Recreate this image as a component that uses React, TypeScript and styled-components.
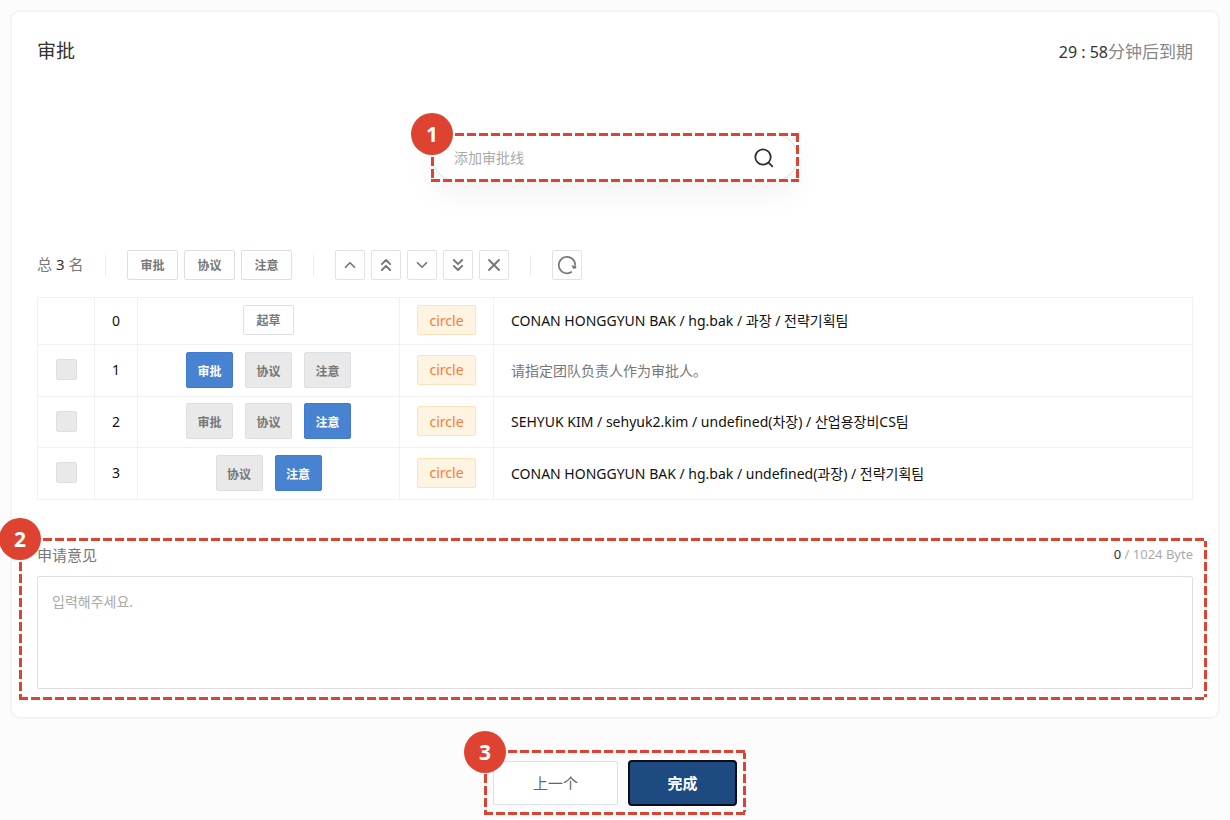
import React from 'react';
import styled, { createGlobalStyle, css } from 'styled-components';
import { ChevronUp, ChevronDown, ChevronsUp, ChevronsDown, X } from 'lucide-react';

const red = '#de4230';
const line = '#f1f1f1';
const controlLine = '#dcdfe4';

const GlobalStyle = createGlobalStyle`
  * { box-sizing: border-box; }
  body {
    margin: 0;
    background: #fcfcfc;
    color: #222;
    font-family: "Noto Sans", "Noto Sans CJK SC", "Noto Sans CJK KR", sans-serif;
    font-size: 14px;
  }
  button, input, textarea { font: inherit; }
`;

const Page = styled.main`
  padding: 10px 10px 14px;
`;

const Card = styled.section`
  display: flex;
  flex-direction: column;
  padding: 23px 25px 28px;
  border: 2px solid #f4f4f4;
  border-radius: 10px;
  background: #fff;
`;

const Header = styled.header`
  display: flex;
  align-items: center;
  justify-content: space-between;
  height: 30px;
`;

const Title = styled.h1`
  margin: 0;
  font-size: 19px;
  font-weight: 400;
  color: #333;
`;

const Timer = styled.p`
  margin: 0;
  font-size: 17px;
  color: #888;
`;

const TimerValue = styled.span`
  color: #333;
  font-size: 16px;
`;

const Callout = styled.div<{ $inset: string }>`
  position: relative;

  &::after {
    content: '';
    position: absolute;
    inset: ${({ $inset }) => $inset};
    pointer-events: none;
    background:
      repeating-linear-gradient(90deg, ${red} 0 9px, #fff 9px 12px) top / 100% 3px no-repeat,
      repeating-linear-gradient(90deg, ${red} 0 9px, #fff 9px 12px) bottom / 100% 3px no-repeat,
      repeating-linear-gradient(180deg, ${red} 0 9px, #fff 9px 12px) left / 3px 100% no-repeat,
      repeating-linear-gradient(180deg, ${red} 0 9px, #fff 9px 12px) right / 3px 100% no-repeat;
  }
`;

const Badge = styled.span<{ $top: number; $left: number }>`
  position: absolute;
  z-index: 1;
  top: ${({ $top }) => $top}px;
  left: ${({ $left }) => $left}px;
  display: flex;
  align-items: center;
  justify-content: center;
  width: 42px;
  height: 42px;
  border-radius: 50%;
  background: ${red};
  color: #fff;
  font-family: "Open Sans", sans-serif;
  font-size: 21px;
  font-weight: 700;
`;

const SearchCallout = styled(Callout)`
  align-self: center;
  width: 366px;
  margin: 69px 0;
`;

const SearchBox = styled.form`
  display: flex;
  align-items: center;
  height: 47px;
  padding: 0 23px 0 21px;
  border: 1px solid ${controlLine};
  border-radius: 24px;
  background: #fff;
  box-shadow: 0 12px 32px rgba(0, 0, 0, 0.06);
`;

const SearchInput = styled.input`
  flex: 1;
  min-width: 0;
  padding: 0;
  border: 0;
  outline: 0;
  background: none;
  &::placeholder { color: #aaa; }
`;

const SearchButton = styled.button`
  display: flex;
  padding: 0;
  border: 0;
  background: none;
  color: #2b2f36;
`;

const Toolbar = styled.div`
  display: flex;
  align-items: center;
  height: 30px;
  margin-bottom: 17px;
`;

const Count = styled.span`
  width: 47px;
  font-size: 15px;
  line-height: 20px;
  padding-bottom: 2px;
  color: #777;
  white-space: nowrap;
`;

const CountValue = styled.span`
  color: #333;
`;

const Separator = styled.span`
  width: 1px;
  height: 21px;
  margin: 0 21px;
  background: #ececec;
`;

const ButtonGroup = styled.div`
  display: flex;
  gap: 6px;
`;

const SmallButton = styled.button`
  width: 51px;
  height: 30px;
  padding: 0;
  border: 1px solid ${controlLine};
  border-radius: 2px;
  background: #fff;
  color: #777;
  font-size: 12px;
  font-weight: 700;
`;

const IconButton = styled.button`
  display: flex;
  align-items: center;
  justify-content: center;
  width: 30px;
  height: 30px;
  padding: 0;
  border: 1px solid #e2e2e2;
  border-radius: 2px;
  background: #fff;
  color: #777;
`;

const Table = styled.table`
  width: 100%;
  border-collapse: collapse;
  table-layout: fixed;
`;

const Row = styled.tr<{ $height: number }>`
  height: ${({ $height }) => $height}px;
`;

const Cell = styled.td<{ $left?: boolean; $muted?: boolean }>`
  padding: 0 ${({ $left }) => ($left ? 17 : 0)}px 2px;
  border: 1px solid ${line};
  text-align: ${({ $left }) => ($left ? 'left' : 'center')};
  color: ${({ $muted }) => ($muted ? '#777' : '#111')};
`;

const CheckBox = styled.input`
  appearance: none;
  display: block;
  width: 21px;
  height: 21px;
  margin: 0 auto;
  border: 1px solid ${controlLine};
  border-radius: 2px;
  background: #e9e9e9;
`;

const Roles = styled.div`
  display: flex;
  justify-content: center;
  gap: 12px;
`;

const RoleButton = styled.button<{ $active?: boolean }>`
  width: 47px;
  height: 36px;
  padding: 2px 0 0;
  border: 1px solid ${controlLine};
  border-radius: 2px;
  background: #e9e9e9;
  color: #777;
  font-size: 12px;
  font-weight: 700;
  ${({ $active }) =>
    $active &&
    css`
      border-color: #3f7ccd;
      background: #4883d1;
      color: #fff;
    `}
`;

const Tag = styled.span`
  display: flex;
  align-items: center;
  justify-content: center;
  width: 59px;
  height: 30px;
  margin: 0 auto;
  border: 1px solid #ffe2b9;
  border-radius: 2px;
  background: #fff3e1;
  color: #fb7a35;
`;

const CommentCallout = styled(Callout)`
  margin-top: 43px;
`;

const FieldHeader = styled.div`
  display: flex;
  align-items: center;
  justify-content: space-between;
  height: 22px;
  margin-bottom: 11px;
`;

const FieldLabel = styled.label`
  font-size: 15px;
  color: #777;
`;

const ByteCount = styled.span`
  font-size: 13px;
  color: #aaa;
`;

const ByteValue = styled.span`
  color: #333;
`;

const TextArea = styled.textarea`
  display: block;
  width: 100%;
  height: 113px;
  padding: 14px;
  border: 1px solid ${controlLine};
  border-radius: 2px;
  outline: 0;
  resize: none;
  background: #fff;
  &::placeholder { color: #aaa; }
`;

const Footer = styled.footer`
  display: flex;
  justify-content: center;
  margin-top: 41px;
`;

const Actions = styled(Callout)`
  display: flex;
  align-items: center;
  gap: 10px;
`;

const PreviousButton = styled.button`
  width: 125px;
  height: 44px;
  padding: 0 0 2px;
  border: 1px solid ${controlLine};
  border-radius: 2px;
  background: #fff;
  color: #666;
  font-size: 15px;
`;

const DoneButton = styled.button`
  width: 109px;
  height: 46px;
  padding: 0 0 2px;
  border: 2px solid #0b0f14;
  border-radius: 4px;
  background: #1d4a80;
  color: #fff;
  font-size: 15px;
  font-weight: 700;
`;

const SearchIcon = () => (
  <svg width="20" height="20" viewBox="0 0 20 20" fill="none" stroke="currentColor" strokeWidth="1.8" aria-hidden="true">
    <circle cx="9" cy="9" r="7.7" />
    <path d="M14.6 14.6L18.8 18.8" />
  </svg>
);

const RefreshIcon = () => (
  <svg width="20" height="20" viewBox="0 0 20 20" fill="none" aria-hidden="true">
    <path d="M14.8 16.7A8.2 8.2 0 1 1 18.2 10.2" stroke="currentColor" strokeWidth="1.7" />
    <path d="M14.4 10.4H19.2V13.6H17.4L16.7 14.2Z" fill="currentColor" />
  </svg>
);

type Approver = { roles: string[]; active?: string; text: string; muted?: boolean; height: number };

const approvers: Approver[] = [
  { roles: [], text: 'CONAN HONGGYUN BAK / hg.bak / 과장 / 전략기획팀', height: 47 },
  { roles: ['审批', '协议', '注意'], active: '审批', text: '请指定团队负责人作为审批人。', muted: true, height: 52 },
  { roles: ['审批', '协议', '注意'], active: '注意', text: 'SEHYUK KIM / sehyuk2.kim / undefined(차장) / 산업용장비CS팀', height: 51 },
  { roles: ['协议', '注意'], active: '注意', text: 'CONAN HONGGYUN BAK / hg.bak / undefined(과장) / 전략기획팀', height: 52 },
];

const moves = [
  { label: '上移', Icon: ChevronUp, size: 18 },
  { label: '移到顶部', Icon: ChevronsUp, size: 20 },
  { label: '下移', Icon: ChevronDown, size: 18 },
  { label: '移到底部', Icon: ChevronsDown, size: 20 },
  { label: '删除', Icon: X, size: 20 },
];

export default function App() {
  return (
    <Page lang="zh-CN">
      <GlobalStyle />
      <Card>
        <Header>
          <Title>审批</Title>
          <Timer><TimerValue>29 : 58</TimerValue>分钟后到期</Timer>
        </Header>

        <SearchCallout $inset="-1px">
          <Badge $top={-21} $left={-21}>1</Badge>
          <SearchBox onSubmit={(e) => e.preventDefault()}>
            <SearchInput aria-label="添加审批线" placeholder="添加审批线" />
            <SearchButton aria-label="搜索"><SearchIcon /></SearchButton>
          </SearchBox>
        </SearchCallout>

        <Toolbar>
          <Count>总 <CountValue>3</CountValue> 名</Count>
          <Separator />
          <ButtonGroup>
            {['审批', '协议', '注意'].map((name) => <SmallButton key={name}>{name}</SmallButton>)}
          </ButtonGroup>
          <Separator />
          <ButtonGroup>
            {moves.map(({ label, Icon, size }) => (
              <IconButton key={label} aria-label={label}><Icon size={size} strokeWidth={2.3} /></IconButton>
            ))}
          </ButtonGroup>
          <Separator />
          <IconButton aria-label="重置"><RefreshIcon /></IconButton>
        </Toolbar>

        <Table>
          <colgroup>
            <col style={{ width: 57 }} />
            <col style={{ width: 43 }} />
            <col style={{ width: 262 }} />
            <col style={{ width: 94 }} />
            <col />
          </colgroup>
          <tbody>
            {approvers.map(({ roles, active, text, muted, height }, index) => (
              <Row key={index} $height={height}>
                <Cell>{index > 0 && <CheckBox type="checkbox" aria-label={`选择 ${index}`} />}</Cell>
                <Cell>{index}</Cell>
                <Cell>
                  {index === 0 ? (
                    <SmallButton>起草</SmallButton>
                  ) : (
                    <Roles>
                      {roles.map((role) => <RoleButton key={role} $active={role === active}>{role}</RoleButton>)}
                    </Roles>
                  )}
                </Cell>
                <Cell><Tag>circle</Tag></Cell>
                <Cell $left $muted={muted}>{text}</Cell>
              </Row>
            ))}
          </tbody>
        </Table>

        <CommentCallout $inset="-5px -14px -11px -18px">
          <Badge $top={-25} $left={-38}>2</Badge>
          <FieldHeader>
            <FieldLabel htmlFor="comment">申请意见</FieldLabel>
            <ByteCount><ByteValue>0</ByteValue> / 1024 Byte</ByteCount>
          </FieldHeader>
          <TextArea id="comment" placeholder="입력해주세요." />
        </CommentCallout>
      </Card>

      <Footer>
        <Actions $inset="-10px -9px -9px -9px">
          <Badge $top={-29} $left={-29}>3</Badge>
          <PreviousButton>上一个</PreviousButton>
          <DoneButton>完成</DoneButton>
        </Actions>
      </Footer>
    </Page>
  );
}
